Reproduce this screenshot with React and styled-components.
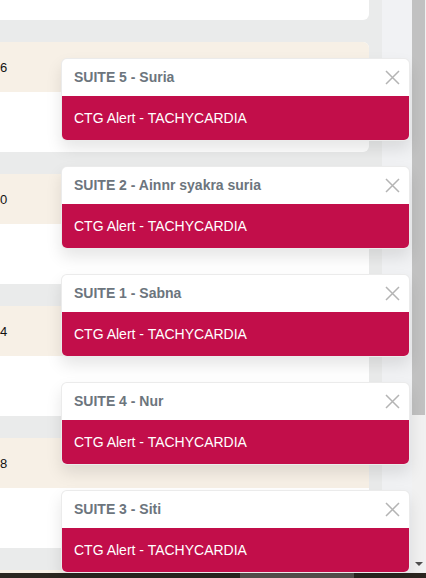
import React from "react";
import styled, { createGlobalStyle } from "styled-components";

const GlobalStyle = createGlobalStyle`
  html, body {
    margin: 0;
    padding: 0;
    overflow: hidden;
    background: #ebebeb;
  }
  body {
    font-family: "Liberation Sans", Arial, sans-serif;
  }
`;

const Screen = styled.div`
  position: relative;
  width: 426px;
  height: 578px;
  display: flex;
  flex-direction: column;
  overflow: hidden;
`;

const Top = styled.div`
  display: flex;
  height: 573px;
`;

const Main = styled.div`
  width: 382px;
  padding-right: 13px;
  box-sizing: border-box;
  background: #eaebeb;
  overflow: hidden;
`;

const CardList = styled.div`
  display: flex;
  flex-direction: column;
  gap: 22px;
  margin-top: -90px;
  margin-left: -12px;
`;

const Card = styled.div`
  border-radius: 6px;
  overflow: hidden;
  background: #fff;
`;

const CardHead = styled.div`
  height: 50px;
  display: flex;
  align-items: center;
  padding-left: 12px;
  background: #f7f0e6;
  color: #111;
  font-size: 13px;
`;

const CardBody = styled.div`
  height: 60px;
`;

const Side = styled.div`
  width: 30px;
  background: #f1f2f4;
`;

const Track = styled.div`
  width: 14px;
  background: #f1f1f1;
  display: flex;
  flex-direction: column;
  align-items: flex-start;
`;

const Thumb = styled.div`
  width: 13px;
  height: 415px;
  background: #c1c1c1;
`;

const Arrow = styled.div`
  margin-top: auto;
  margin-bottom: 7px;
  margin-left: 3px;
  width: 0;
  height: 0;
  border-left: 4px solid transparent;
  border-right: 4px solid transparent;
  border-top: 4px solid #505050;
`;

const HBar = styled.div`
  height: 5px;
  background: #2b2620;
  display: flex;
`;

const HThumb = styled.div`
  margin-left: 240px;
  width: 114px;
  background: #57534f;
`;

const ToastStack = styled.div`
  position: absolute;
  top: 58px;
  left: 61px;
  width: 349px;
  display: flex;
  flex-direction: column;
  gap: 25px;
`;

const Toast = styled.div`
  border-radius: 6px;
  overflow: hidden;
  background: #fff;
  border: 1px solid rgba(0, 0, 0, 0.08);
  box-shadow: 0 8px 16px rgba(0, 0, 0, 0.1);
  box-sizing: border-box;
`;

const ToastHeader = styled.div`
  height: 37px;
  display: flex;
  align-items: center;
  padding: 0 9px 0 12px;
  color: #6c757d;
  font-size: 14px;
  font-weight: bold;
`;

const Title = styled.strong`
  flex: 1;
  padding-bottom: 1px;
`;

const CloseButton = styled.button`
  border: 0;
  padding: 0;
  background: transparent;
  width: 15px;
  height: 15px;
  display: flex;
  cursor: pointer;
`;

const ToastBody = styled.div`
  height: 44px;
  padding: 0 12px;
  display: flex;
  align-items: center;
  background: #c20e4a;
  color: #fff;
  font-size: 14px;
`;

const rows = ["6", "0", "4", "8", ""];

const alerts = [
  "SUITE 5 - Suria",
  "SUITE 2 - Ainnr syakra suria",
  "SUITE 1 - Sabna",
  "SUITE 4 - Nur",
  "SUITE 3 - Siti",
];

function CloseIcon() {
  return (
    <svg width="15" height="15" viewBox="0 0 15 15">
      <path d="M1 1 L14 14 M14 1 L1 14" stroke="#b4b4b4" strokeWidth="1.5" fill="none" />
    </svg>
  );
}

export default function App() {
  return (
    <>
      <GlobalStyle />
      <Screen>
        <Top>
          <Main>
            <CardList>
              <Card>
                <CardHead />
                <CardBody />
              </Card>
              {rows.map((value, i) => (
                <Card key={i}>
                  <CardHead>{value}</CardHead>
                  <CardBody />
                </Card>
              ))}
            </CardList>
          </Main>
          <Side />
          <Track>
            <Thumb />
            <Arrow />
          </Track>
        </Top>
        <HBar>
          <HThumb />
        </HBar>
        <ToastStack>
          {alerts.map((title) => (
            <Toast key={title}>
              <ToastHeader>
                <Title>{title}</Title>
                <CloseButton aria-label="Close">
                  <CloseIcon />
                </CloseButton>
              </ToastHeader>
              <ToastBody>CTG Alert - TACHYCARDIA</ToastBody>
            </Toast>
          ))}
        </ToastStack>
      </Screen>
    </>
  );
}
